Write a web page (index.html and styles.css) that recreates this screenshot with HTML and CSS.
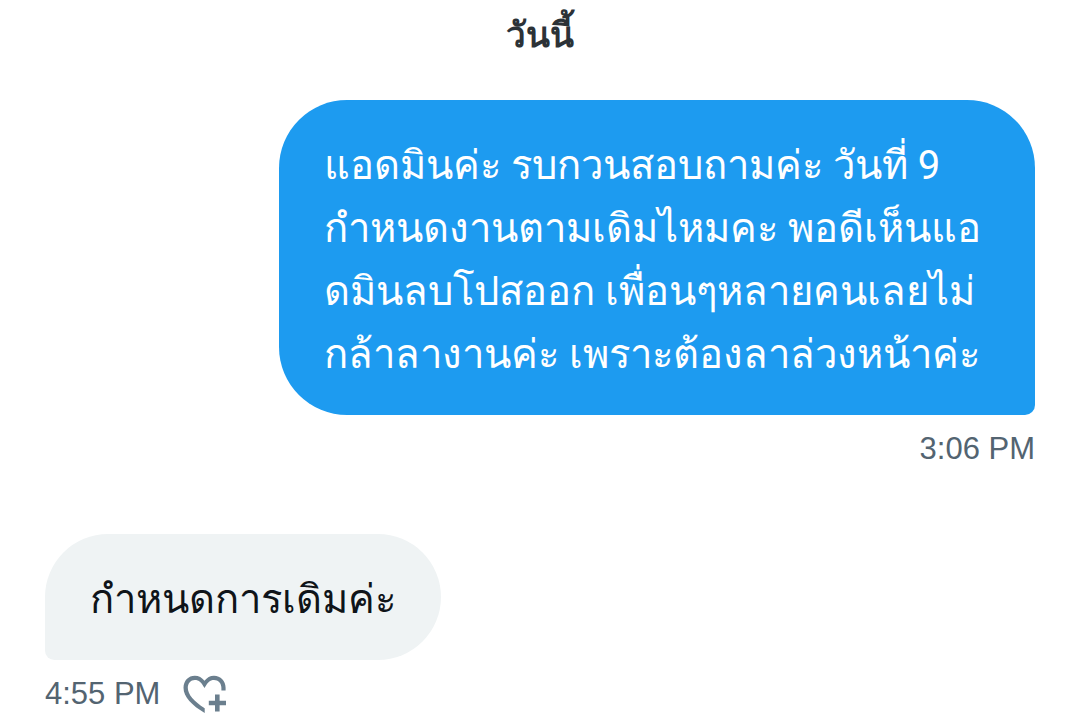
FILE: index.html
```html
<!DOCTYPE html>
<html lang="th">
<head>
  <meta charset="UTF-8">
  <meta name="viewport" content="width=device-width, initial-scale=1.0">
  <title>ข้อความ</title>
  <link rel="stylesheet" href="styles.css">
</head>
<body>
  <main class="chat">
    <h1 class="chat-day">วันนี้</h1>

    <article class="message sent">
      <p class="bubble">แอดมินค่ะ รบกวนสอบถามค่ะ วันที่ 9 กำหนดงานตามเดิมไหมคะ พอดีเห็นแอดมินลบโปสออก เพื่อนๆหลายคนเลยไม่กล้าลางานค่ะ เพราะต้องลาล่วงหน้าค่ะ</p>
      <div class="meta"><time datetime="15:06">3:06 PM</time></div>
    </article>

    <article class="message received">
      <p class="bubble">กำหนดการเดิมค่ะ</p>
      <div class="meta">
        <time datetime="16:55">4:55 PM</time>
        <button class="react-btn" type="button" aria-label="เพิ่มความรู้สึก">
          <svg viewBox="0 0 46 40" width="46" height="40" aria-hidden="true">
            <path d="M22.7 39C10 31.5 1.500 23 1.500 13.800C1.500 6.500 6.500 1.700 12.800 1.700C16.800 1.700 20 3.500 22.500 6.800C25 3.500 28 1.700 32 1.700C38.700 1.700 43.600 6.800 43.600 13.800V16.400H39.400V13.800C39.400 9 36.300 5.900 32 5.900C28 5.900 25.500 8.500 22.500 14C19.500 8.500 17 5.900 12.800 5.900C8.800 5.900 5.800 9 5.800 13.800C5.800 20.500 12 27.500 22.700 34.200Z"/>
            <path d="M33 20.500H37.600V26.700H44V31.300H37.600V37.500H33V31.300H26.800V26.700H33Z"/>
          </svg>
        </button>
      </div>
    </article>
  </main>
</body>
</html>
```

FILE: styles.css
```css
:root {
  --blue: #1d9bf0;
  --grey: #eff3f4;
  --text: #0f1419;
  --muted: #536471;
  --icon: #6b7f8e;
}
body {
  margin: 0;
  background: #ffffff;
  color: var(--text);
  font-family: Roboto, "Noto Sans", sans-serif;
}
.chat {
  display: flex;
  flex-direction: column;
  padding: 14px 40px 0 45px;
}
.chat-day {
  margin: 0 0 42px;
  color: #2c3237;
  font-size: 35px;
  line-height: 44px;
  font-weight: 700;
  text-align: center;
}
.message {
  display: flex;
  flex-direction: column;
  align-items: flex-start;
}
.sent {
  align-items: flex-end;
  margin-bottom: 65px;
}
.bubble {
  box-sizing: border-box;
  max-width: calc(100% - 234px);
  margin: 0;
  padding: 34px 45px 29px;
  font-size: 40px;
  line-height: 63px;
  border-radius: 68px;
}
.sent .bubble {
  background: var(--blue);
  color: #ffffff;
  border-bottom-right-radius: 10px;
}
.received .bubble {
  background: var(--grey);
  border-bottom-left-radius: 10px;
}
.meta {
  display: flex;
  align-items: center;
  gap: 22px;
  margin-top: 14px;
  color: var(--muted);
  font-family: "Liberation Sans", sans-serif;
  font-size: 31px;
  line-height: 40px;
}
.react-btn {
  display: flex;
  padding: 0;
  border: none;
  background: none;
  color: var(--icon);
  cursor: pointer;
}
.react-btn path {
  fill: currentColor;
}
```
